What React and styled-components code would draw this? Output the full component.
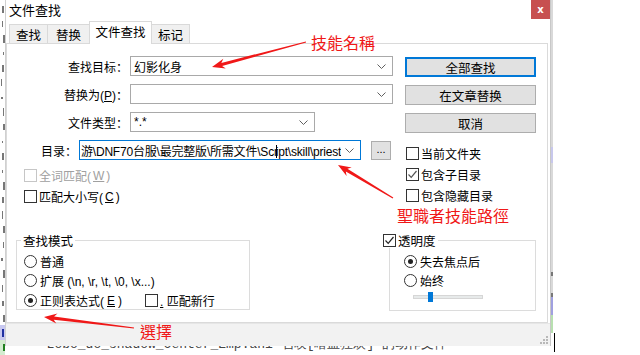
import styled, { createGlobalStyle } from "styled-components";

const GlobalStyle = createGlobalStyle`
  html, body { margin: 0; padding: 0; background: #fff; }
  body {
    font-family: "Liberation Sans", "Noto Sans CJK SC", sans-serif;
    font-size: 12px;
    color: #000;
  }
`;

const Screen = styled.div`
  position: relative;
  display: flex;
  width: 640px;
  height: 355px;
  overflow: hidden;
  background: #fff;
`;

const EditorStrip = styled.div`
  width: 5px;
  flex-shrink: 0;
  display: flex;
  flex-direction: column;
  padding-top: 2px;
`;

const StripLine = styled.div`
  height: 18px;
  display: flex;
  align-items: center;
  justify-content: flex-end;
  padding-right: ${(p) => p.$r}px;
  background: ${(p) => p.$bg || "transparent"};
`;

const StripMark = styled.div`
  width: ${(p) => p.$w}px;
  height: ${(p) => p.$h}px;
  background: ${(p) => p.$color || "#777"};
`;

const MainColumn = styled.div`
  width: 546px;
  flex-shrink: 0;
  display: flex;
  flex-direction: column;
`;

const Window = styled.div`
  height: 346px;
  box-sizing: border-box;
  display: flex;
  flex-direction: column;
  background: #fff;
  border-left: 1px solid #d0d0d0;
  border-right: 1px solid #c8c8c8;
`;

const TitleBar = styled.div`
  height: 21px;
  display: flex;
  justify-content: space-between;
  align-items: flex-start;
`;

const Title = styled.span`
  padding: 3px 0 0 3px;
  font-size: 13px;
  line-height: 16px;
`;

const CloseButton = styled.div`
  width: 19px;
  height: 19px;
  background: #c75050;
  color: #fff;
  font-family: "DejaVu Sans", sans-serif;
  font-weight: bold;
  font-size: 10px;
  display: flex;
  align-items: center;
  justify-content: center;
`;

const TabsRow = styled.div`
  height: 22px;
  display: flex;
  align-items: flex-end;
  padding-left: 4px;
  position: relative;
  z-index: 1;
`;

const Tab = styled.div`
  width: ${(p) => p.$w}px;
  height: ${(p) => (p.$active ? 23 : 19)}px;
  margin-bottom: ${(p) => (p.$active ? -1 : 0)}px;
  margin-left: -1px;
  box-sizing: border-box;
  border: 1px solid #d9d9d9;
  border-bottom: none;
  background: ${(p) => (p.$active ? "#fff" : "#f0f0f0")};
  display: flex;
  align-items: center;
  justify-content: center;
  padding-bottom: ${(p) => (p.$active ? 3 : 0)}px;
  font-size: 12.5px;
`;

const Panel = styled.div`
  height: 280px;
  margin-right: 2px;
  box-sizing: border-box;
  border: 1px solid #dadada;
  padding-top: 12px;
  display: flex;
  flex-direction: column;
`;

const TopSection = styled.div`
  display: flex;
`;

const LeftForm = styled.div`
  width: 398px;
  display: flex;
  flex-direction: column;
`;

const FormRows = styled.div`
  display: grid;
  row-gap: 8px;
`;

const FormRow = styled.div`
  display: flex;
  align-items: center;
  height: 20px;
`;

const Label = styled.span`
  width: ${(p) => p.$w}px;
  margin-right: 2px;
  text-align: right;
  white-space: nowrap;
`;

const Combo = styled.div`
  width: ${(p) => p.$w}px;
  height: 20px;
  box-sizing: border-box;
  border: 1px solid ${(p) => (p.$focus ? "#0078d7" : "#a9a9a9")};
  display: flex;
  align-items: center;
  justify-content: space-between;
  padding: 0 6px 0 ${(p) => p.$pad ?? 3}px;
  background: #fff;
  white-space: nowrap;
  overflow: hidden;
`;

const ComboText = styled.span`
  overflow: hidden;
  letter-spacing: ${(p) => (p.$tight ? "-0.2px" : "0")};
`;

const TextCaret = styled.span`
  display: inline-block;
  width: 1px;
  height: 13px;
  margin: 0 -1px 0 -2px;
  vertical-align: -2px;
  background: #000;
`;

const BrowseButton = styled.div`
  width: 20px;
  height: 19px;
  margin-left: 10px;
  box-sizing: border-box;
  border: 1px solid #adadad;
  background: #e1e1e1;
  display: flex;
  align-items: center;
  justify-content: center;
  font-size: 11px;
  padding-bottom: 3px;
`;

const CheckList = styled.div`
  display: flex;
  flex-direction: column;
  margin-top: ${(p) => p.$top}px;
  padding-left: ${(p) => p.$left}px;
`;

const CheckRow = styled.label`
  height: 21px;
  display: flex;
  align-items: center;
  gap: 2px;
  color: ${(p) => (p.$disabled ? "#a0a0a0" : "#000")};
  white-space: nowrap;
`;

const Box = styled.span`
  width: 13px;
  height: 13px;
  box-sizing: border-box;
  border: 1px solid ${(p) => (p.$disabled ? "#c6c6c6" : "#333")};
  background: #fff;
  display: inline-flex;
  align-items: center;
  justify-content: center;
  flex-shrink: 0;
`;

const Round = styled.span`
  width: 13px;
  height: 13px;
  box-sizing: border-box;
  border: 1px solid #333;
  border-radius: 50%;
  background: #fff;
  display: inline-flex;
  align-items: center;
  justify-content: center;
  flex-shrink: 0;
  &::after {
    content: "";
    display: ${(p) => (p.$on ? "block" : "none")};
    width: 5px;
    height: 5px;
    border-radius: 50%;
    background: #222;
  }
`;

const Underline = styled.span`
  text-decoration: underline;
`;

const RightColumn = styled.div`
  width: 131px;
  margin-top: 1px;
  display: flex;
  flex-direction: column;
`;

const ButtonStack = styled.div`
  display: grid;
  row-gap: 8px;
`;

const ActionButton = styled.div`
  height: 20px;
  box-sizing: border-box;
  border: ${(p) => (p.$primary ? "2px solid #0078d7" : "1px solid #adadad")};
  background: #e1e1e1;
  display: flex;
  align-items: center;
  justify-content: center;
  font-size: 12.5px;
`;

const BottomSection = styled.div`
  margin-top: 33px;
  padding-left: 9px;
  display: flex;
  gap: 139px;
`;

const GroupBox = styled.div`
  width: ${(p) => p.$w}px;
  height: ${(p) => p.$h}px;
  box-sizing: border-box;
  border: 1px solid #dcdcdc;
  padding-left: ${(p) => p.$pad}px;
  display: flex;
  flex-direction: column;
`;

const Legend = styled.div`
  align-self: flex-start;
  height: 16px;
  margin: -9px 0 0 ${(p) => p.$shift}px;
  padding: 0 2px 0 ${(p) => p.$lpad ?? 2}px;
  background: #fff;
  display: flex;
  align-items: center;
  gap: 2px;
  font-size: 12.5px;
  white-space: nowrap;
`;

const RadioList = styled.div`
  margin-top: 4px;
  display: flex;
  flex-direction: column;
`;

const RadioRow = styled.label`
  height: 19px;
  display: flex;
  align-items: center;
  gap: 3px;
  white-space: nowrap;
`;

const SplitRow = styled.div`
  height: 19px;
  display: grid;
  grid-template-columns: 121px auto;
  align-items: center;
`;

const SliderRow = styled.div`
  height: 13px;
  margin-left: 9px;
  display: flex;
  align-items: center;
`;

const Track = styled.div`
  position: relative;
  width: 70px;
  height: 4px;
  box-sizing: border-box;
  background: #e7eaea;
  border: 1px solid #d6d6d6;
`;

const Thumb = styled.div`
  position: absolute;
  left: 14px;
  top: -4px;
  width: 5px;
  height: 10px;
  background: #0078d7;
`;

const BottomBar = styled.div`
  flex: 1;
  background: #f2f2f2;
  border-top: 1px solid #e6e6e6;
  display: flex;
  justify-content: flex-end;
  align-items: flex-end;
  padding: 0 2px 2px 0;
`;

const EditorLine = styled.div`
  height: 7px;
  overflow: hidden;
  padding-left: 26px;
`;

const EditorText = styled.div`
  margin-top: -9px;
  font-family: "Liberation Mono", monospace;
  font-size: 13px;
  line-height: 15px;
  color: #444;
  white-space: nowrap;
`;

const RightEdge = styled.div`
  width: 2px;
  flex-shrink: 0;
  background: linear-gradient(
    to bottom,
    #d9d9d9 0, #d9d9d9 147px,
    #c8c8ec 147px, #c8c8ec 163px,
    #d9d9d9 163px, #d9d9d9 272px,
    #777 272px, #777 276px,
    #d9d9d9 276px, #d9d9d9 293px,
    #777 293px, #777 297px,
    #a0a0e0 297px, #a0a0e0 315px,
    #b8e0b0 315px, #b8e0b0 333px,
    #fff 333px
  );
`;

const RightArea = styled.div`
  flex: 1;
  padding: 333px 0 0 1px;
`;

const EditorCaret = styled.div`
  width: 1px;
  height: 19px;
  background: #000;
`;

const Annotations = styled.div`
  position: absolute;
  inset: 0;
  pointer-events: none;
`;

const RedNote = styled.span`
  position: absolute;
  left: ${(p) => p.$x}px;
  top: ${(p) => p.$y}px;
  font-family: "Noto Sans CJK TC", sans-serif;
  font-size: 16px;
  line-height: 16px;
  color: #f01818;
  white-space: nowrap;
`;

const Chevron = () => (
  <svg width="9" height="5" viewBox="0 0 9 5">
    <path d="M0.5 0.5 L4.5 4.5 L8.5 0.5" fill="none" stroke="#606060" strokeWidth="1" />
  </svg>
);

const Check = ({ color = "#222" }) => (
  <svg width="11" height="11" viewBox="0 0 11 11">
    <path d="M1.5 5.5 L4.2 8.3 L9.5 2" fill="none" stroke={color} strokeWidth="1.2" />
  </svg>
);

const Grip = () => (
  <svg width="8" height="8" viewBox="0 0 8 8">
    {[[6, 0], [6, 3], [3, 3], [6, 6], [3, 6], [0, 6]].map(([x, y]) => (
      <rect key={`${x}-${y}`} x={x} y={y} width="2" height="2" fill="#b8b8b8" />
    ))}
  </svg>
);

function arrowPoints(x1, y1, x2, y2) {
  const dx = x2 - x1;
  const dy = y2 - y1;
  const len = Math.hypot(dx, dy);
  const ux = dx / len;
  const uy = dy / len;
  const nx = -uy;
  const ny = ux;
  const head = 13;
  const bx = x2 - ux * head;
  const by = y2 - uy * head;
  const nb = x2 - ux * (head - 3);
  const nby = y2 - uy * (head - 3);
  const pts = [
    [x1 + nx * 0.5, y1 + ny * 0.5],
    [nb + nx * 1.6, nby + ny * 1.6],
    [bx + nx * 5, by + ny * 5],
    [x2, y2],
    [bx - nx * 5, by - ny * 5],
    [nb - nx * 1.6, nby - ny * 1.6],
    [x1 - nx * 0.5, y1 - ny * 0.5],
  ];
  return pts.map(([x, y]) => `${x.toFixed(1)},${y.toFixed(1)}`).join(" ");
}

const arrows = [
  [306, 42, 212, 67],
  [393, 198, 338, 165],
  [134, 328, 44, 317],
];

// fragments of the editor text peeking out at the left edge
const stripLines = [
  { w: 2, h: 7, r: 1 }, { w: 1, h: 6, r: 2 }, { w: 2, h: 8, r: 0 }, { w: 1, h: 3, r: 1 },
  { w: 2, h: 7, r: 1 }, { w: 1, h: 7, r: 3 }, { w: 2, h: 2, r: 2 }, { w: 1, h: 8, r: 1 },
  { w: 2, h: 6, r: 0 }, { w: 1, h: 2, r: 2 }, { w: 2, h: 7, r: 1 }, { w: 1, h: 3, r: 2 },
  { w: 2, h: 8, r: 0 }, { w: 2, h: 6, r: 1 }, { w: 1, h: 8, r: 2 }, { w: 2, h: 7, r: 0 },
  { w: 1, h: 6, r: 1 }, { w: 2, h: 3, r: 2 }, { w: 2, h: 8, r: 0 }, { w: 1, h: 7, r: 2 },
  { w: 2, h: 5, r: 1 }, { w: 2, h: 7, r: 0 },
  { w: 2, h: 8, r: 1, bg: "#c8c8f0", color: "#2030a0" },
  { w: 2, h: 7, r: 0, bg: "#d4ecd0", color: "#208020" },
];

export default function App() {
  return (
    <Screen>
      <GlobalStyle />
      <EditorStrip>
        {stripLines.map((l, i) => (
          <StripLine key={i} $bg={l.bg} $r={l.r}>
            <StripMark $w={l.w} $h={l.h} $color={l.color} />
          </StripLine>
        ))}
      </EditorStrip>

      <MainColumn>
        <Window>
          <TitleBar>
            <Title>文件查找</Title>
            <CloseButton>x</CloseButton>
          </TitleBar>

          <TabsRow>
            <Tab $w={39}>查找</Tab>
            <Tab $w={43}>替换</Tab>
            <Tab $w={63} $active>文件查找</Tab>
            <Tab $w={39}>标记</Tab>
          </TabsRow>

          <Panel>
            <TopSection>
              <LeftForm>
                <FormRows>
                  <FormRow>
                    <Label $w={121}>查找目标：</Label>
                    <Combo $w={263}>
                      <ComboText>幻影化身</ComboText>
                      <Chevron />
                    </Combo>
                  </FormRow>
                  <FormRow>
                    <Label $w={121}>替换为(<Underline>P</Underline>)：</Label>
                    <Combo $w={263}>
                      <ComboText />
                      <Chevron />
                    </Combo>
                  </FormRow>
                  <FormRow>
                    <Label $w={121}>文件类型：</Label>
                    <Combo $w={185}>
                      <ComboText>*.*</ComboText>
                      <Chevron />
                    </Combo>
                  </FormRow>
                  <FormRow>
                    <Label $w={70}>目录：</Label>
                    <Combo $w={282} $focus $pad={1}>
                      <ComboText $tight>
                        游\DNF70台服\最完整版\所需文件\Scr<TextCaret />ipt\skill\priest
                      </ComboText>
                      <Chevron />
                    </Combo>
                    <BrowseButton>...</BrowseButton>
                  </FormRow>
                </FormRows>

                <CheckList $top={5} $left={17}>
                  <CheckRow $disabled>
                    <Box $disabled />
                    全词匹配(<Underline>W</Underline>)
                  </CheckRow>
                  <CheckRow>
                    <Box />
                    匹配大小写(<Underline>C</Underline>)
                  </CheckRow>
                </CheckList>
              </LeftForm>

              <RightColumn>
                <ButtonStack>
                  <ActionButton $primary>全部查找</ActionButton>
                  <ActionButton>在文章替换</ActionButton>
                  <ActionButton>取消</ActionButton>
                </ButtonStack>
                <CheckList $top={10} $left={1}>
                  <CheckRow>
                    <Box />
                    当前文件夹
                  </CheckRow>
                  <CheckRow>
                    <Box>
                      <Check color="#555" />
                    </Box>
                    包含子目录
                  </CheckRow>
                  <CheckRow>
                    <Box />
                    包含隐藏目录
                  </CheckRow>
                </CheckList>
              </RightColumn>
            </TopSection>

            <BottomSection>
              <GroupBox $w={234} $h={70} $pad={7}>
                <Legend $shift={-3}>查找模式</Legend>
                <RadioList>
                  <RadioRow>
                    <Round />
                    普通
                  </RadioRow>
                  <RadioRow>
                    <Round />
                    扩展 (\n, \r, \t, \0, \x...)
                  </RadioRow>
                  <SplitRow>
                    <RadioRow>
                      <Round $on />
                      正则表达式(<Underline>E</Underline>)
                    </RadioRow>
                    <CheckRow>
                      <Box />
                      <span>
                        <Underline>.</Underline> 匹配新行
                      </span>
                    </CheckRow>
                  </SplitRow>
                </RadioList>
              </GroupBox>

              <GroupBox $w={147} $h={71} $pad={14}>
                <Legend $shift={-21} $lpad={0}>
                  <Box>
                    <Check />
                  </Box>
                  透明度
                </Legend>
                <RadioList>
                  <RadioRow>
                    <Round $on />
                    失去焦点后
                  </RadioRow>
                  <RadioRow>
                    <Round />
                    始终
                  </RadioRow>
                  <SliderRow>
                    <Track>
                      <Thumb />
                    </Track>
                  </SliderRow>
                </RadioList>
              </GroupBox>
            </BottomSection>
          </Panel>

          <BottomBar>
            <Grip />
          </BottomBar>
        </Window>
        <EditorLine>
          <EditorText>= Lobo_do_shadow_Center_Emp.ani  召唤[嗜血狂欢] 的动作文件</EditorText>
        </EditorLine>
      </MainColumn>

      <RightEdge />
      <RightArea>
        <EditorCaret />
      </RightArea>

      <Annotations>
        <svg width="640" height="355">
          {arrows.map((a, i) => (
            <polygon key={i} points={arrowPoints(...a)} fill="#f01818" />
          ))}
        </svg>
        <RedNote $x={311} $y={34}>技能名稱</RedNote>
        <RedNote $x={397} $y={207}>聖職者技能路徑</RedNote>
        <RedNote $x={140} $y={323}>選擇</RedNote>
      </Annotations>
    </Screen>
  );
}
